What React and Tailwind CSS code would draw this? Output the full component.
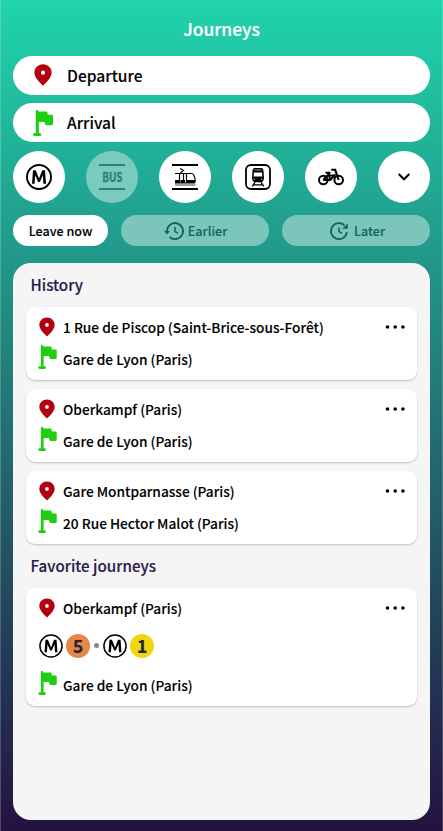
import React from "react";

function Pin({ className }) {
  return (
    <svg viewBox="0 0 18 22" className={className} fill="#b30011">
      <path
        fillRule="evenodd"
        d="M9 .3C4 .3.4 4 .4 8.6c0 4.200 3 7.900 8.600 13.100 5.600-5.200 8.600-8.900 8.600-13.100C17.600 4 14 .3 9 .3Zm0 6.300a2.100 2.100 0 1 1 0 4.200 2.100 2.100 0 0 1 0-4.200Z"
      />
    </svg>
  );
}

function Flag({ className }) {
  return (
    <svg viewBox="0 0 20 26" className={className} fill="#1fce12">
      <path d="M2.800 1.200a1.300 1.300 0 0 1 2.600 0v.4h7.900c.9 0 1.400 1 1.500 3.200h3.800c.9 0 1.400.5 1.400 1.400v7.400c0 1.100-.7 1.700-1.700 1.700h-4.700c-1.200 0-1.800-1-2-3.300H5.800V23h1a1.500 1.500 0 0 1 0 3H1.500a1.500 1.500 0 0 1 0-3h1.300Z" />
    </svg>
  );
}

function Metro({ className, stroke = 1.9 }) {
  return (
    <svg viewBox="0 0 26 26" className={className} fill="none" stroke="#000">
      <circle cx="13" cy="13" r="12" strokeWidth={stroke} />
      <path d="M6 19.700 7 6.300h2.700L13 14.500l3.300-8.200H19l1 13.400h-2.600l-.6-8.700-2.900 7h-1.800L9.200 11l-.6 8.700Z" fill="#000" stroke="none" />
    </svg>
  );
}

function Tram() {
  return (
    <svg viewBox="0 0 26 26" className="size-[26px]" fill="none" stroke="#000">
      <path d="M0 1h26M0 25h26" strokeWidth="1.800" />
      <path d="M3 21h20.500" stroke="#8a8a8a" strokeWidth="1.600" />
      <path d="M3 9.500h17c1.600 0 3.200 4.500 3.200 7.200 0 1.500-.8 2.300-2 2.300H3M7.500 9v10M11.500 9v10M14.500 9v10M8 4.500l3.500 1.800-3 2.700" strokeWidth="1.200" />
      <path d="M3 16h4.500v3H3zM8.500 16h4.500v3H8.500zM15 16h8.200c0 2-.6 3-2 3H15z" fill="#000" stroke="none" />
    </svg>
  );
}

function Train() {
  return (
    <svg viewBox="0 0 26 26" className="size-[26px]" fill="none" stroke="#000">
      <rect x="1" y="1" width="24" height="24" rx="5" strokeWidth="1.800" />
      <path d="M9.800 4h6.400c1.600 0 2.200 1.500 2.400 4l.4 6c0 2.500-1.500 4.300-3.500 4.300h-5c-2 0-3.500-1.800-3.500-4.300l.4-6c.2-2.500.8-4 2.400-4Z" fill="#000" stroke="none" />
      <path d="M9.500 6h7" stroke="#fff" strokeWidth=".6" />
      <path d="M9 8.500h8l.4 4H8.600z" fill="#fff" stroke="none" />
      <path d="M8.700 15.200h1.300M16 15.200h1.300" stroke="#fff" strokeWidth=".9" />
      <path d="m10 18-2.800 4.300M16 18l2.800 4.300M8.500 20.800h9" strokeWidth="1.300" />
    </svg>
  );
}

function Bike() {
  return (
    <svg viewBox="0 0 26 18" className="h-[18px] w-[26px]" fill="none" stroke="#000">
      <circle cx="5.300" cy="12" r="4.300" strokeWidth="2" />
      <circle cx="20.700" cy="12" r="4.300" strokeWidth="2" />
      <path d="M5.300 12h7l5-5.500M7.500 4.800h5M10 5l2.500 7M10.500 7.500h7M20.700 12 17.200 1.800h-4M5.300 12l4.700-5" strokeWidth="2.100" />
    </svg>
  );
}

function Dots() {
  return (
    <svg viewBox="0 0 20 4" className="mt-px h-1 w-5">
      <circle cx="2.500" cy="2" r="1.800" />
      <circle cx="10.200" cy="2" r="1.800" />
      <circle cx="17.900" cy="2" r="1.800" />
    </svg>
  );
}

function Earlier() {
  return (
    <svg viewBox="0 0 20 18" className="-ml-px h-[18px] w-5" fill="none" stroke="#12665b" strokeWidth="1.900">
      <path d="M3 10V9a8 8 0 1 1 2.600 6" />
      <path d="M11 5v4.500l3 1.800" strokeWidth="1.500" />
      <path d="M0 9h6l-3 3.500z" fill="#12665b" stroke="none" />
    </svg>
  );
}

function Later() {
  return (
    <svg viewBox="0 0 18 18" className="size-[18px]" fill="none" stroke="#12665b" strokeWidth="1.900">
      <path d="M16.900 10.200A8 8 0 1 1 14.500 3.300" />
      <path d="M9 5.500v4l3 1.800" strokeWidth="1.500" />
      <path d="M17.800 1.200v5.600h-5.600z" fill="#12665b" stroke="none" />
    </svg>
  );
}

function Field({ icon, label }) {
  return (
    <div className="flex h-[39px] items-center rounded-full bg-white pl-5">
      <div className="flex w-[34px] shrink-0">{icon}</div>
      <span className="pb-0.5 text-[15.600px] font-medium leading-6 [-webkit-text-stroke:0.1px]">{label}</span>
    </div>
  );
}

function Mode({ off, children }) {
  return (
    <div className={"flex size-[52px] items-center justify-center rounded-full " + (off ? "bg-[#7bcabe]" : "bg-white")}>
      {children}
    </div>
  );
}

function Card({ from, to, children }) {
  return (
    <div className="rounded-[9px] bg-white pt-2 pb-[9px] pl-[11.500px] text-[13.700px] font-medium shadow-[0_1px_2px_rgba(0,0,0,0.22)] [-webkit-text-stroke:0.1px]">
      <div className="flex h-6 items-center pr-3">
        <Pin className="mr-[8.500px] ml-px h-5 w-4" />
        <span className="grow leading-6">{from}</span>
        <Dots />
      </div>
      {children}
      <div className="mt-2 flex h-6 items-center">
        <Flag className="mt-[-3px] mr-[6.500px] h-6 w-[19px]" />
        <span className="leading-6">{to}</span>
      </div>
    </div>
  );
}

function Heading({ children }) {
  return (
    <h2 className="flex h-11 items-center pb-0.5 pl-[4.500px] text-[15.200px] font-medium text-[#2b1a4a] [-webkit-text-stroke:0.15px]">
      {children}
    </h2>
  );
}

export default function App() {
  return (
    <div className="flex h-[831px] w-[443px] flex-col border-x border-white/20 bg-linear-to-b/srgb from-[#20d4ab] to-[#24123f] bg-origin-border px-3 pb-[11px] font-['Noto_Sans_CJK_SC',sans-serif] text-black">
      <h1 className="flex h-14 items-center justify-center pt-[3px] text-[17.400px] font-medium text-white [-webkit-text-stroke:0.2px]">Journeys</h1>
      <div className="flex flex-col gap-[8.300px]">
        <Field label="Departure" icon={<Pin className="mt-[-1px] ml-px h-[22px] w-[18px]" />} />
        <Field label="Arrival" icon={<Flag className="h-[26px] w-5" />} />
      </div>
      <div className="mt-[8.700px] flex justify-between">
        <Mode><Metro className="size-[26px]" /></Mode>
        <Mode off>
          <div className="flex h-[26px] w-[26px] items-center justify-center border-y-2 border-[#2b8277] text-[13px] font-bold leading-none text-[#2b8277]">
            <span className="scale-x-[0.76] [-webkit-text-stroke:0.4px]">BUS</span>
          </div>
        </Mode>
        <Mode><Tram /></Mode>
        <Mode><Train /></Mode>
        <Mode><Bike /></Mode>
        <Mode>
          <svg viewBox="0 0 12 8" className="h-2 w-3" fill="none" stroke="#000" strokeWidth="2"><path d="m.7 1 5.300 5.300L11.300 1" /></svg>
        </Mode>
      </div>
      <div className="mt-3 flex h-[31px] gap-[13px] text-[12.600px] font-medium [-webkit-text-stroke:0.1px]">
        <div className="flex w-[95px] items-center justify-center rounded-full bg-white pt-px">Leave now</div>
        <div className="flex w-[148px] items-center justify-center gap-1 rounded-full bg-[#7bc5bb] pt-px pl-0.5 text-[#12665b]"><Earlier />Earlier</div>
        <div className="flex w-[148px] items-center justify-center gap-[6px] rounded-full bg-[#7bc5bb] pt-px pl-[3px] text-[#12665b]"><Later />Later</div>
      </div>
      <div className="mt-[17px] flex grow flex-col rounded-[18px] bg-[#f5f5f5] px-[13px]">
        <Heading>History</Heading>
        <div className="flex flex-col gap-[9px]">
          <Card from="1 Rue de Piscop (Saint-Brice-sous-Forêt)" to="Gare de Lyon (Paris)" />
          <Card from="Oberkampf (Paris)" to="Gare de Lyon (Paris)" />
          <Card from="Gare Montparnasse (Paris)" to="20 Rue Hector Malot (Paris)" />
        </div>
        <Heading>Favorite journeys</Heading>
        <Card from="Oberkampf (Paris)" to="Gare de Lyon (Paris)">
          <div className="mt-[13px] mb-[14px] flex h-[26px] items-center pl-[1.500px] text-[18px] font-bold leading-none text-[#25252f]">
            <Metro className="size-6" stroke={1.6} />
            <span className="ml-[3px] flex size-6 items-center justify-center rounded-full bg-[#e58748] pb-0.5">5</span>
            <span className="mx-1 size-[5px] rounded-full bg-[#888]" />
            <Metro className="size-6" stroke={1.6} />
            <span className="ml-[3px] flex size-6 items-center justify-center rounded-full bg-[#efd60f] pb-0.5">1</span>
          </div>
        </Card>
      </div>
    </div>
  );
}
